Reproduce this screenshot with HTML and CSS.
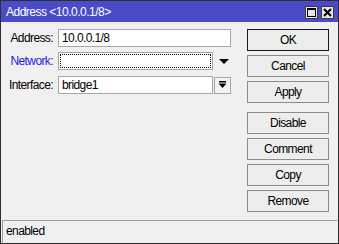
FILE: index.html
```html
<!DOCTYPE html>
<html lang="en">
<head>
<meta charset="UTF-8">
<title>Address &lt;10.0.0.1/8&gt;</title>
<link rel="stylesheet" href="styles.css">
</head>
<body>

<div class="window">
    <div class="titlebar">
        <span class="title">Address &lt;10.0.0.1/8&gt;</span>
        <div class="title-buttons">
            <span class="tbtn">
                <svg width="11" height="11" viewBox="0 0 11 11"><rect x="1.5" y="1.5" width="8" height="8" fill="none" stroke="#000" stroke-width="1"/><rect x="1" y="1" width="9" height="2" fill="#000"/></svg>
            </span>
            <span class="tbtn">
                <svg width="11" height="11" viewBox="0 0 11 11"><path d="M2 2 L9 9 M9 2 L2 9" stroke="#000" stroke-width="2"/></svg>
            </span>
        </div>
    </div>

    <div class="content">
        <div class="form">
            <div class="row">
                <span class="label">Address:</span>
                <div class="field wide">10.0.0.1/8</div>
            </div>
            <div class="row row-network">
                <span class="label blue">Network:</span>
                <div class="field focused"></div>
                <span class="arrow">
                    <svg width="10" height="5" viewBox="0 0 10 5"><path d="M0 0 H10 L5 5 Z" fill="#000"/></svg>
                </span>
            </div>
            <div class="row row-interface">
                <span class="label">Interface:</span>
                <div class="field">bridge1</div>
                <span class="dropbtn">
                    <svg width="9" height="8" viewBox="0 0 9 8"><rect x="1" y="0" width="7" height="1.5" fill="#000"/><path d="M0.5 2.5 H8.5 L4.5 7 Z" fill="#000"/></svg>
                </span>
            </div>
        </div>

        <div class="buttons">
            <button class="default">OK</button>
            <button>Cancel</button>
            <button>Apply</button>
            <button class="group">Disable</button>
            <button>Comment</button>
            <button>Copy</button>
            <button>Remove</button>
        </div>
    </div>

    <div class="status">enabled</div>
</div>

</body>
</html>
```

FILE: styles.css
```css
body {
    margin: 0;
    font-family: "Liberation Sans", Arial, sans-serif;
    font-size: 12px;
    letter-spacing: -0.6px;
    color: #000;
}
.window {
    width: 339px;
    height: 244px;
    box-sizing: border-box;
    border: 1px solid #2e2e2e;
    background-color: #f0f0f0;
    display: flex;
    flex-direction: column;
}
.titlebar {
    height: 21px;
    background-color: #4b4bc8;
    color: #fff;
    display: flex;
    align-items: center;
    justify-content: space-between;
    padding: 0 4px 0 5px;
}
.title {
    font-size: 12px;
    letter-spacing: -0.5px;
}
.title-buttons {
    display: flex;
    gap: 3px;
    margin-top: 2px;
}
.tbtn {
    width: 13px;
    height: 13px;
    box-sizing: border-box;
    border: 1px solid #3a3a3a;
    background-color: #e6e6e6;
    display: flex;
    align-items: center;
    justify-content: center;
}
.content {
    flex: 1;
    display: flex;
    padding-top: 7px;
}
.form {
    width: 246px;
}
.row {
    display: flex;
    align-items: center;
    height: 18px;
}
.row-network {
    margin-top: 5px;
}
.row-interface {
    margin-top: 6px;
}
.label {
    width: 52px;
    margin-right: 5px;
    text-align: right;
}
.blue {
    color: #1c1ce0;
}
.field {
    width: 155px;
    height: 18px;
    box-sizing: border-box;
    border: 1px solid #a6a6a6;
    background-color: #fff;
    padding-left: 3px;
    line-height: 16px;
}
.field.wide {
    width: 173px;
}
.field.focused {
    outline: 1px dotted #000;
    outline-offset: -3px;
}
.arrow {
    display: flex;
    margin-left: 6px;
}
.dropbtn {
    width: 17px;
    height: 17px;
    box-sizing: border-box;
    margin-left: 1px;
    border: 1px solid #a6a6a6;
    background-color: #f4f4f4;
    display: flex;
    align-items: center;
    justify-content: center;
}
.buttons {
    width: 82px;
    display: flex;
    flex-direction: column;
    gap: 4px;
}
button {
    height: 22px;
    padding: 0;
    font-family: "Liberation Sans", Arial, sans-serif;
    font-size: 12px;
    letter-spacing: -0.6px;
    color: #000;
    background-color: #ededed;
    border: 1px solid #8c8c8c;
}
button.default {
    border-color: #1a1a1a;
}
button.group {
    margin-top: 5px;
}
.status {
    height: 22px;
    margin: 0 1px;
    border-top: 1px solid #a0a0a0;
    border-left: 1px solid #a0a0a0;
    padding-left: 3px;
    line-height: 21px;
}
```
